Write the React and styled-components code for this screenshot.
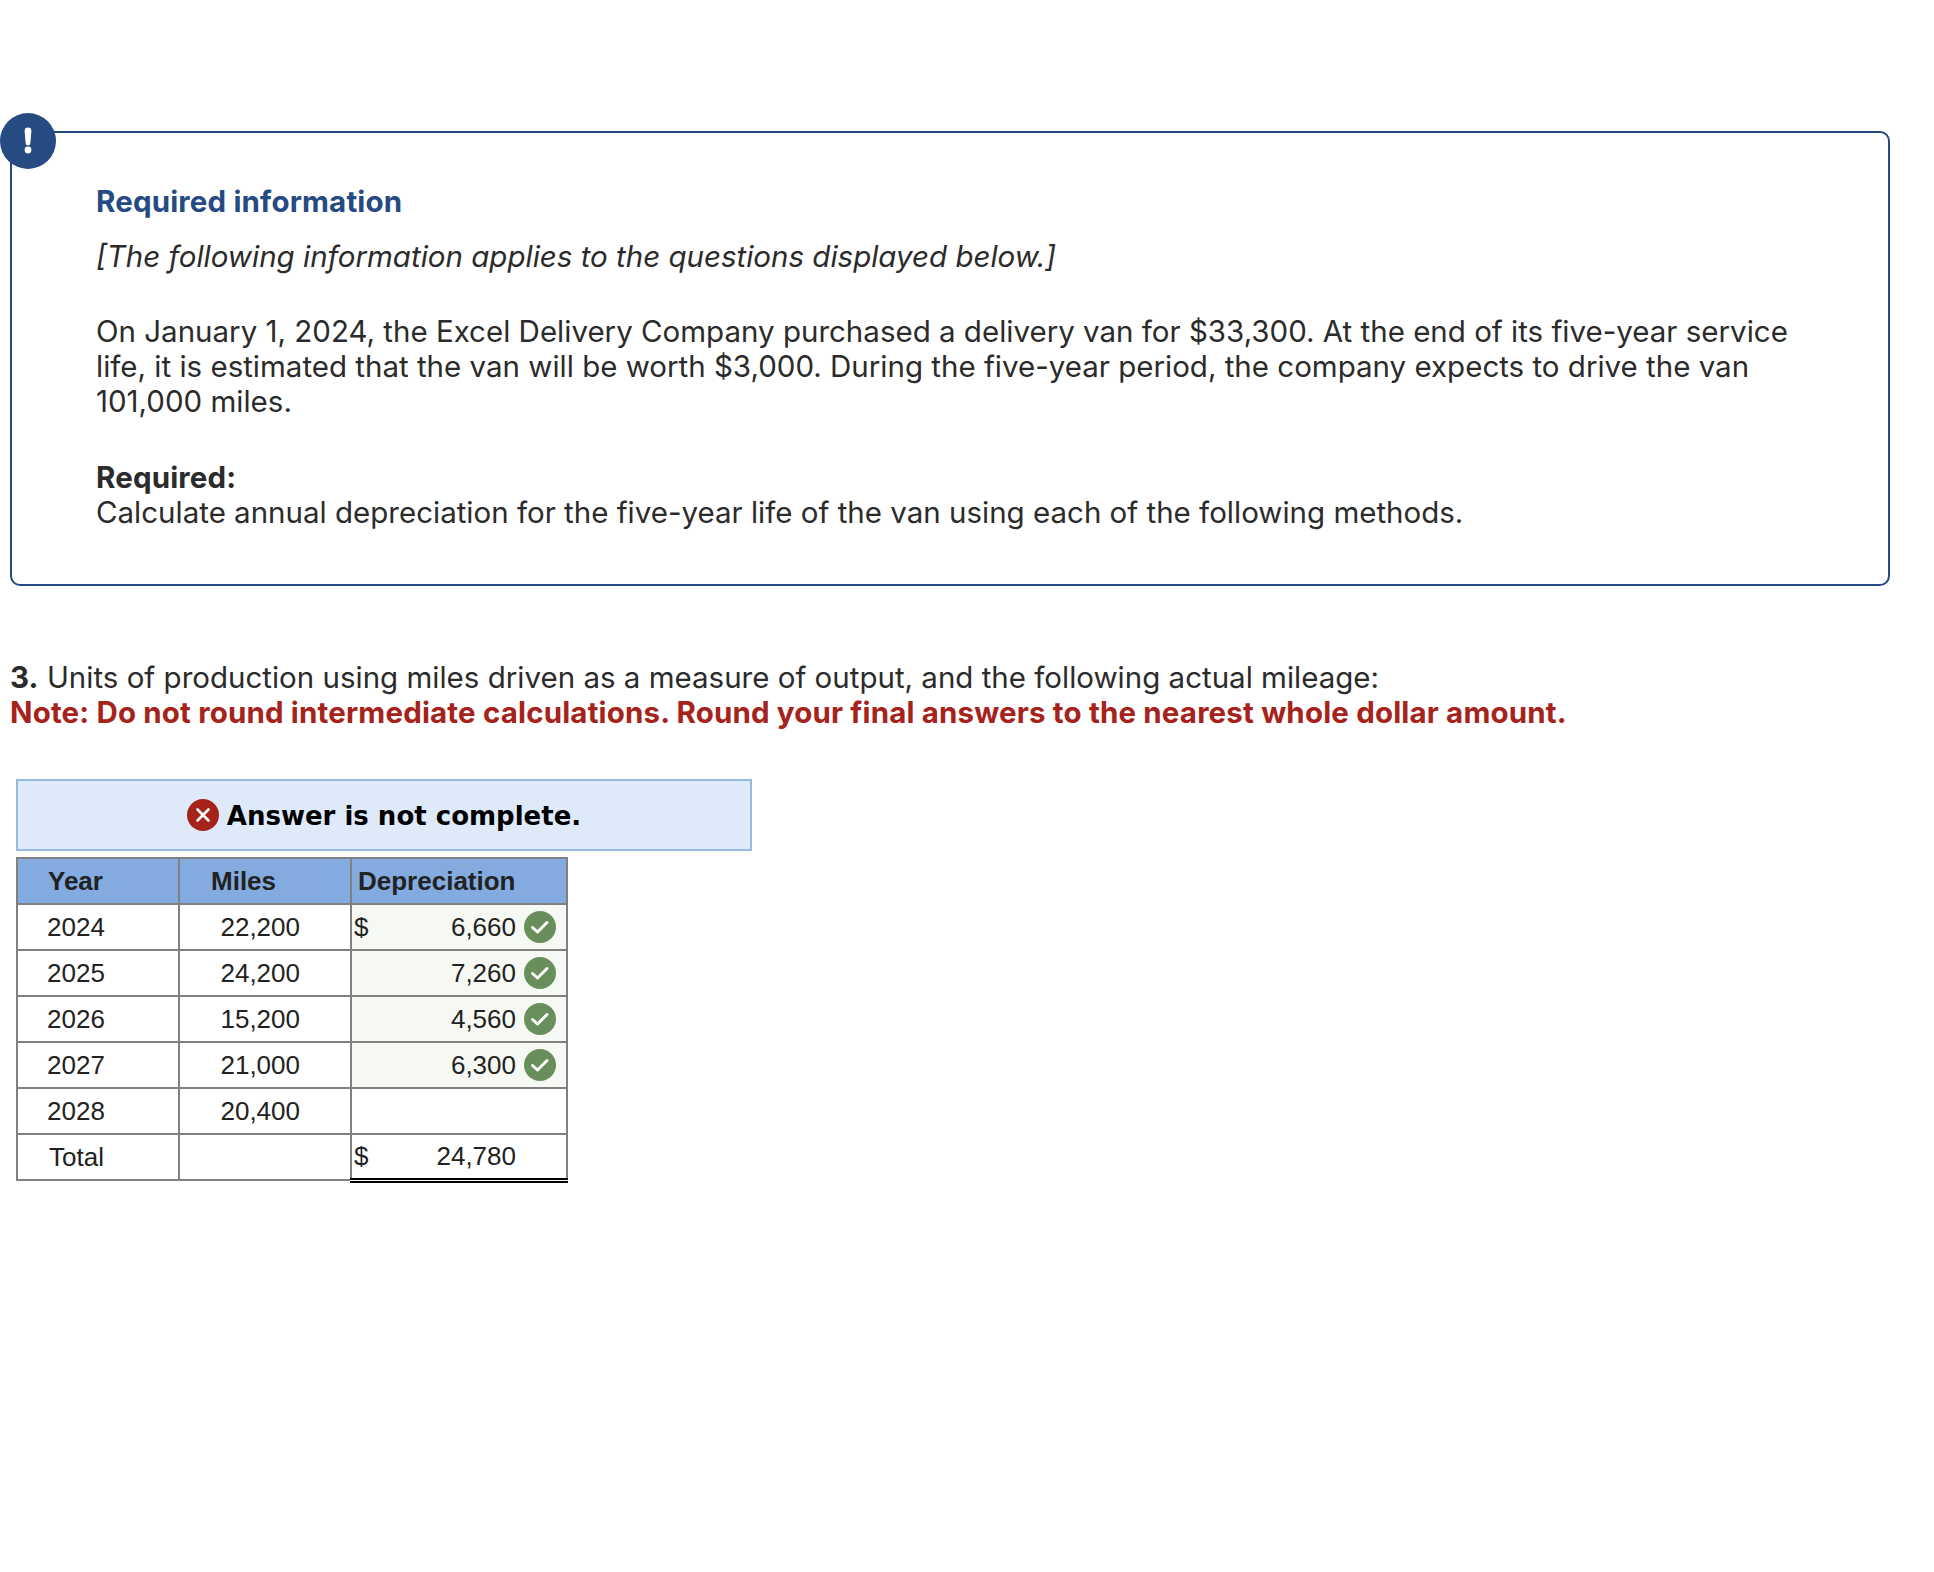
import React from 'react';
import styled, { createGlobalStyle } from 'styled-components';

const GlobalStyle = createGlobalStyle`
  html, body { margin: 0; padding: 0; background: #fff; }
  body { font-family: "Inter", "Liberation Sans", sans-serif; color: #2b2b2b; }
  strong { letter-spacing: 0.16px; }
`;

const Page = styled.div`
  width: 1934px;
  height: 1572px;
  padding: 131px 0 0 10px;
  box-sizing: border-box;
  font-size: 29.5px;
  line-height: 35px;
`;

const InfoBox = styled.section`
  position: relative;
  width: 1880px;
  height: 455px;
  box-sizing: border-box;
  border: 2px solid #264a82;
  border-radius: 10px;
  padding: 51px 92px 0 84px;
`;

const Badge = styled.div`
  position: absolute;
  left: -12px;
  top: -20px;
  width: 56px;
  height: 56px;
  border-radius: 50%;
  background: #264a82;
  display: flex;
  align-items: center;
  justify-content: center;
`;

const InfoTitle = styled.h2`
  margin: 0;
  font-size: 29.5px;
  line-height: 35px;
  font-weight: 700;
  letter-spacing: 0.16px;
  color: #264a82;
`;

const Lead = styled.p`
  margin: 20px 0 0;
  font-style: italic;
`;

const Para = styled.p`
  margin: ${props => props.$gap}px 0 0;
`;

const Question = styled.p`
  margin: 74px 0 0;
`;

const Note = styled.strong`
  display: block;
  color: #a5231b;
`;

const Banner = styled.div`
  width: 736px;
  height: 72px;
  margin: 49px 0 0 6px;
  box-sizing: border-box;
  border: 2px solid #9ab8e0;
  background: #deeafa;
  display: flex;
  align-items: center;
  justify-content: center;
  gap: 8px;
  font-family: "DejaVu Sans", sans-serif;
  font-weight: 700;
  font-size: 26px;
  color: #000;
`;

const BannerText = styled.span`
  padding-top: 2px;
`;

const Table = styled.table`
  margin: 6px 0 0 6px;
  border-collapse: collapse;
  table-layout: fixed;
  width: 550px;
  font-family: "Liberation Sans", Arial, sans-serif;
  font-size: 26px;
  line-height: 30px;
  color: #222;
`;

const Th = styled.th`
  height: 46px;
  padding: 0 0 0 ${props => props.$pad}px;
  border: 2px solid #808080;
  background: #83abe0;
  text-align: left;
  font-weight: 700;
  box-sizing: border-box;
`;

const Td = styled.td`
  height: 46px;
  padding: 0 ${props => props.$right || 0}px 0 ${props => props.$left || 0}px;
  border: 2px solid #808080;
  text-align: ${props => props.$align || 'left'};
  box-sizing: border-box;
`;

const DepCell = styled.td`
  height: 46px;
  padding: 0 10px 0 2px;
  border: 2px solid #808080;
  background: ${props => (props.$ok ? '#f6f9f3' : '#fff')};
  ${props => props.$total && 'border-bottom: 5px double #000;'}
  box-sizing: border-box;
`;

const DepInner = styled.div`
  display: flex;
  align-items: center;
  gap: 8px;
`;

const Amount = styled.span`
  flex: 1;
  text-align: right;
  padding-right: ${props => props.$pad || 0}px;
`;

const CrossIcon = () => (
  <svg width="32" height="32" viewBox="0 0 32 32">
    <circle cx="16" cy="16" r="16" fill="#a5231b" />
    <path d="M10.5 10.5 L21.5 21.5 M21.5 10.5 L10.5 21.5" stroke="#fff" strokeWidth="2.6" strokeLinecap="round" />
  </svg>
);

const CheckIcon = () => (
  <svg width="32" height="32" viewBox="0 0 32 32">
    <circle cx="16" cy="16" r="16" fill="#688f5b" />
    <path d="M8.5 16.5 L13.5 21 L23 11.5" fill="none" stroke="#fff" strokeWidth="3" strokeLinecap="round" strokeLinejoin="round" />
  </svg>
);

const BangIcon = () => (
  <svg width="14" height="28" viewBox="0 0 14 28">
    <path d="M3.6 4 a3.4 3.4 0 0 1 6.8 0 L9.4 16 a2.4 2.4 0 0 1 -4.8 0 Z" fill="#fff" />
    <circle cx="7" cy="23" r="3.4" fill="#fff" />
  </svg>
);

const rows = [
  { year: 2024, miles: '22,200', dep: '6,660', dollar: true },
  { year: 2025, miles: '24,200', dep: '7,260' },
  { year: 2026, miles: '15,200', dep: '4,560' },
  { year: 2027, miles: '21,000', dep: '6,300' },
  { year: 2028, miles: '20,400' },
];

export default function App() {
  return (
    <>
      <GlobalStyle />
      <Page>
        <InfoBox>
          <Badge><BangIcon /></Badge>
          <InfoTitle>Required information</InfoTitle>
          <Lead>[The following information applies to the questions displayed below.]</Lead>
          <Para $gap={40}>
            On January 1, 2024, the Excel Delivery Company purchased a delivery van for $33,300. At the end of its five-year service life, it is estimated that the van will be worth $3,000. During the five-year period, the company expects to drive the van 101,000 miles.
          </Para>
          <Para $gap={41}>
            <strong>Required:</strong><br />
            Calculate annual depreciation for the five-year life of the van using each of the following methods.
          </Para>
        </InfoBox>
        <Question>
          <strong>3.</strong> Units of production using miles driven as a measure of output, and the following actual mileage:
          <Note>Note: Do not round intermediate calculations. Round your final answers to the nearest whole dollar amount.</Note>
        </Question>
        <Banner><CrossIcon /><BannerText>Answer is not complete.</BannerText></Banner>
        <Table>
          <colgroup>
            <col style={{ width: 162 }} />
            <col style={{ width: 172 }} />
            <col style={{ width: 216 }} />
          </colgroup>
          <thead>
            <tr>
              <Th $pad={30}>Year</Th>
              <Th $pad={31}>Miles</Th>
              <Th $pad={6}>Depreciation</Th>
            </tr>
          </thead>
          <tbody>
            {rows.map(r => (
              <tr key={r.year}>
                <Td $left={29}>{r.year}</Td>
                <Td $align="right" $right={50}>{r.miles}</Td>
                <DepCell $ok={!!r.dep}>
                  {r.dep && (
                    <DepInner>
                      <span>{r.dollar ? '$' : ''}</span>
                      <Amount>{r.dep}</Amount>
                      <CheckIcon />
                    </DepInner>
                  )}
                </DepCell>
              </tr>
            ))}
            <tr>
              <Td $left={31}>Total</Td>
              <Td />
              <DepCell $total>
                <DepInner>
                  <span>$</span>
                  <Amount $pad={40}>24,780</Amount>
                </DepInner>
              </DepCell>
            </tr>
          </tbody>
        </Table>
      </Page>
    </>
  );
}
